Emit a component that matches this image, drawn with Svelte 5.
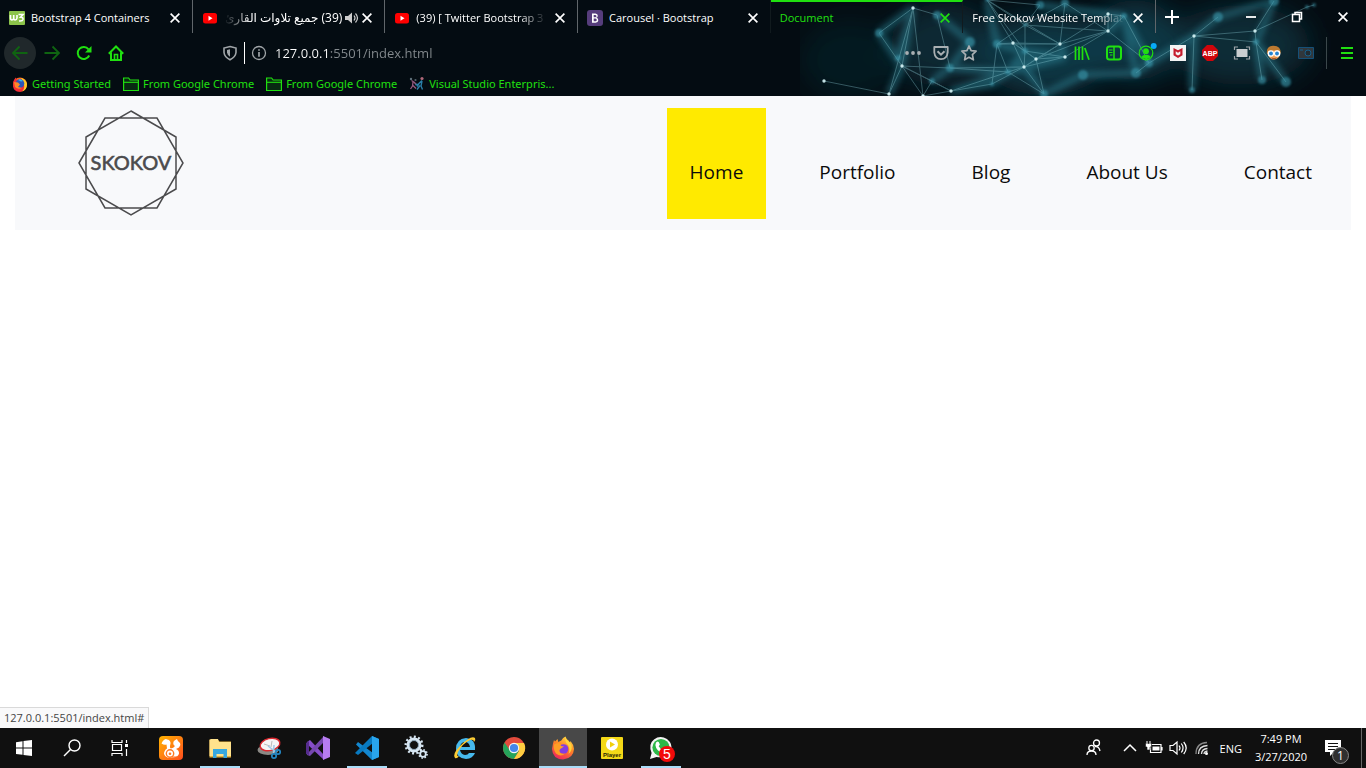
<script>
  const icons = {
    w3: '<rect width="16" height="14" y="1" rx="1" fill="#8bc34a"/><path d="M1.500 5v3q0 2 1.500 2T4.700 8V5v3q0 2 1.500 2T8 8V5M9.500 4.500h4.500l-2.400 2.600q2.600 0 2.400 2.300-.4 1.900-3.900 1.500" fill="none" stroke="#fff" stroke-width="1.600"/>',
    youtube: '<rect x="1" y="3" width="14" height="10.500" rx="2.500" fill="#f00"/><path d="M6.500 5.800v5l4-2.500z" fill="#fff"/>',
    bootstrap: '<rect width="16" height="16" rx="3" fill="#563d7c"/><path d="M5 3.500h3.500q2.300.2 2.300 2.200 0 1.600-1.500 2 2 .4 2 2.500 0 2.300-2.700 2.500H5zM6.700 5v2.200h1.700q1.500-.2 1-1.500-.3-.7-1.200-.7zM6.700 8.400v2.900h1.900q1.600-.2 1-2-.3-.8-1.300-.9z" fill="#fff" fill-rule="evenodd"/>',
    close: '<path d="M3 3l10 10M13 3L3 13" fill="none" stroke="currentColor" stroke-width="1.900"/>',
    speaker: '<path d="M1 6v4h3l4 3.500v-11L4 6z" fill="#ccc"/><path d="M10 5.500q2 2.500 0 5M11.500 3.500q4 4.500 0 9" fill="none" stroke="#ccc" stroke-width="1.200"/>',
    back: '<path d="M15.500 8H1.500M7.500 1.500L1 8l6.500 6.500" fill="none" stroke="currentColor" stroke-width="1.800"/>',
    forward: '<path d="M.5 8h14M8.500 1.500L15 8l-6.500 6.500" fill="none" stroke="currentColor" stroke-width="1.800"/>',
    reload: '<path d="M13.200 10.500A6 6 0 1 1 12.500 4.300" fill="none" stroke="currentColor" stroke-width="2"/><path d="M15.500 1v6.500H9z" fill="currentColor"/>',
    home: '<path d="M.8 8.700L8 1.500l7.200 7.200M3 7.500V15h10V7.500" fill="none" stroke="currentColor" stroke-width="2"/><path d="M6.500 14.500V9.500h3v5" fill="none" stroke="currentColor" stroke-width="1.600"/>',
    shield: '<path d="M8 1.500L14 3v4.500Q13.500 12 8 14.800 2.500 12 2 7.500V3z" fill="none" stroke="#a0a5a8" stroke-width="1.600"/><path d="M8 4.200L5 5v2.500q.4 2.800 3 4.200z" fill="#a0a5a8"/>',
    info: '<circle cx="8" cy="8" r="6.500" fill="none" stroke="#a0a5a8" stroke-width="1.300"/><path d="M8 7v4.800M8 4.200v1.600" stroke="#a0a5a8" stroke-width="1.700"/>',
    dots: '<g fill="#a9afb2"><circle cx="2" cy="8" r="1.900"/><circle cx="8" cy="8" r="1.900"/><circle cx="14" cy="8" r="1.900"/></g>',
    pocket: '<path d="M1.300 2h13.400v5.500Q14 14 8 14.200 2 14 1.300 7.500z" fill="none" stroke="#a9afb2" stroke-width="1.800" stroke-linejoin="round"/><path d="M4.500 6.300L8 9.700l3.500-3.400" fill="none" stroke="#a9afb2" stroke-width="2"/>',
    star: '<path d="M8 1l2.100 4.700 5 .5-3.700 3.500 1 5.100L8 12.300l-4.400 2.500 1-5.100L.9 6.200l5-.5z" fill="none" stroke="#a9afb2" stroke-width="1.700" stroke-linejoin="round"/>',
    library: '<path d="M1.500 1.500v13.500M5 1.500v13.500M8.500 1.500v13.500M10.800 3L15 14.700" stroke="currentColor" stroke-width="1.700" fill="none"/>',
    sidebar: '<rect x="1" y="1.500" width="14" height="13" rx="2.500" fill="none" stroke="currentColor" stroke-width="2"/><path d="M8 2v12" stroke="currentColor" stroke-width="1.500"/><path d="M3 5h3.500M3 7.500h3.500M4 10h2.500" stroke="currentColor" stroke-width="1"/>',
    account: '<circle cx="8" cy="8" r="6.800" fill="none" stroke="currentColor" stroke-width="1.200"/><circle cx="8" cy="6.200" r="2.900" fill="currentColor"/><path d="M3.500 12.300Q4 9.800 8 9.700t4.500 2.600Q8 15.500 3.500 12.300" fill="currentColor"/><circle cx="15.700" cy="1" r="3" fill="#08aaf8"/>',
    mcafee: '<path d="M0 0h16v16H0z" fill="#f4f4f4"/><path d="M3.500 3L8 5.300 12.500 3v7.200L8 13l-4.500-2.800z" fill="#c51c2c"/><path d="M5.700 6.200L8 7.700l2.300-1.500v3L8 10.500 5.700 9.200z" fill="#f4f4f4"/>',
    abp: '<path d="M5 0h6l5 5v6l-5 5H5l-5-5V5z" fill="#d0050b"/><text x="8" y="11" text-anchor="middle" font-family="Liberation Sans" font-size="7" font-weight="700" fill="#fff">ABP</text>',
    capture: '<path d="M2.500 4h11v8h-11z" fill="#c9cdd0"/><path d="M.5 5V2H4M12 2h3.500v3M15.500 11v3H12M4 14H.5v-3" fill="none" stroke="#9da3a8" stroke-width="1.200"/>',
    goggles: '<circle cx="8" cy="8.500" r="6" fill="#f1a257"/><path d="M1 9Q0 1 7 .8 15 .5 15 9l-3-4-6 .5-4 3z" fill="#bc7930"/><circle cx="4.800" cy="8.500" r="3.200" fill="#fff"/><circle cx="11.200" cy="8.500" r="3.200" fill="#fff"/><circle cx="5" cy="8.500" r="1.900" fill="#2383d2"/><circle cx="11" cy="8.500" r="1.900" fill="#2383d2"/><path d="M5.500 13q2.500 1.500 5 0" stroke="#a34d24" fill="none"/>',
    camera: '<path d="M.5 2.500h15v11H.5z" fill="#30373c" stroke="#155078"/><circle cx="10" cy="8" r="3" fill="#222b31" stroke="#17608c"/><path d="M2 5h3" stroke="#17608c"/>',
    menu: '<path d="M2 3h12M2 8h12M2 13h12" stroke="currentColor" stroke-width="2"/>',
    plus: '<path d="M8 1v14M1 8h14" stroke="#fff" stroke-width="2"/>',
    minimize: '<path d="M3 8h10" stroke="#fff" stroke-width="1.800"/>',
    restore: '<path d="M3.500 5.500h7v7h-7zM6 5V3.500h6.500V10H11" fill="none" stroke="#fff" stroke-width="1.500"/>',
    firefoxSmall: '<circle cx="8" cy="8.500" r="7" fill="#f46820"/><path d="M1.500 5L3.500 1.500 5 4q5-3 9 2 2 7-4 9.500Q2 17 1 10" fill="#f52c36"/><path d="M9 2q5 1 6 6 0 6-5 7.500 3-3 2-7z" fill="#ffcb26"/><circle cx="8" cy="7.500" r="4.300" fill="#2d56b8"/><path d="M2 6l4 .5 2 2-2 2.500 4 1q-4 2-7-1z" fill="#ff8726"/><path d="M6 4l2-1 3 2-2 .5z" fill="#39b7ef"/>',
    folder: '<path d="M.6 14.500V2h5l1.500 2h8.300v10.500z" fill="#082a12" stroke="currentColor" stroke-width="1.200"/><path d="M1 6.300h14" stroke="currentColor" stroke-width="1.100"/>',
    vsEvent: '<path d="M2.500 4.500l3 2 1.500 2M4 6l-.5 4-2 3M4 9.500l3 3" fill="none" stroke="#96587f" stroke-width="1.300"/><path d="M13 4.500l-3 3-2 3M13 5l-1 5 1.500 3.500M8.500 8l-2 1M11 9.500l-3 4" fill="none" stroke="#2a7fa8" stroke-width="1.400"/><circle cx="2" cy="3" r="1.200" fill="#60707a"/><circle cx="13" cy="2.500" r="1.600" fill="#b0687a"/><circle cx="6.500" cy="4" r="1.100" fill="#55656d"/>'
  };

  const taskIcons = {
    start: '<path d="M4 6.200l6.500-1v6.300H4zM11.500 5L20 4v7.500h-8.500zM4 12.500h6.500v6.300L4 18zM11.500 12.500H20V20l-8.500-1z" fill="#fff"/>',
    search: '<circle cx="14.500" cy="9.500" r="5.500" fill="none" stroke="#fff" stroke-width="1.400"/><path d="M10.500 13.500L4 20" stroke="#fff" stroke-width="1.500"/>',
    tasks: '<path d="M4 4v2.500h10V4M4 20v-2.500h10V20M4.500 8.500h9v6h-9zM18.500 4v3M18.500 13v7" fill="none" stroke="#fff" stroke-width="1.200"/><path d="M17 8h3v3h-3z" fill="#fff"/>',
    uc: '<defs><linearGradient id="uc" x2="1" y2="1"><stop stop-color="#ffb400"/><stop offset="1" stop-color="#ff4d1f"/></linearGradient></defs><rect width="24" height="24" rx="4" fill="url(#uc)"/><path d="M2.500 7.500Q4 3.500 7 3l1 .6q3 .4 3.600 3.400l-.6 3q-.4 1.600.8 2.400 2.700-.2 4.200-2.400-2.500-1.500-1.400-4.500.8-1.500 3.400-2.500.6 2.500 3 4 1.300 2.300-1 4.500l-3 1.500q3.200 1 3 4.500-.7 3.500-5.500 4H8.500q-2.500-.5-3.500-3.500 0-3.500 3-5.500L7.500 8.500q-2.500.7-5-1z" fill="#fff"/><circle cx="11" cy="17.500" r="3.700" fill="none" stroke="#ff7a22" stroke-width="1.400"/><circle cx="11" cy="17.700" r="1.300" fill="#ff7a22"/><path d="M13 21h6" stroke="#ff6a20"/>',
    explorer: '<path d="M1.500 3.500h8l2 2H23v16H1.500z" fill="#e5b23d"/><path d="M3 3h7l1 3h12v14H1.500V4z" fill="#ffe28c"/><path d="M5 22v-9h14v9h-3.500v-4h-7v4z" fill="#37a9df"/>',
    snip: '<ellipse cx="11" cy="14" rx="10.500" ry="5" fill="#8b8985"/><ellipse cx="13" cy="8.500" rx="10" ry="6" transform="rotate(-13 13 8.500)" fill="#f5f5f5" stroke="#db2930" stroke-width="1.400"/><path d="M7 8l6 2M15 5l-1 6" stroke="#bbb"/><path d="M11 10l8 6M17 9l-.500 8" stroke="#9fc8e6" stroke-width="1.500"/><circle cx="21" cy="16" r="2.200" fill="none" stroke="#2386c2" stroke-width="1.700"/><circle cx="17" cy="20" r="2.200" fill="none" stroke="#2386c2" stroke-width="1.700"/>',
    vs: '<path d="M1 6l3-2 14 15V24L1 8z" fill="#864dc8"/><path d="M1 18l17-18v6L4 20l-3-1z" fill="#7547ae"/><path d="M0 7l3-2v14l-3-1z" fill="#552c8d"/><path d="M17 0l7 3v18l-7 3z" fill="#b77cf2"/>',
    code: '<path d="M17 0l7 3v18l-7 3L1 8.500l2-2.500L18 17z" fill="#1387cf"/><path d="M18 7L3 19l-3-2L17 0z" fill="#087ac1"/><path d="M17 0l7 3v18l-7 3z" fill="#29a5ed"/>',
    gears: '<g fill="none" stroke="#d7e6f2"><circle cx="10" cy="9" r="6" stroke-width="3"/><circle cx="10" cy="9" r="8.300" stroke-width="2.400" stroke-dasharray="2 2.300"/><circle cx="19" cy="18" r="2.800" stroke-width="1.800"/><circle cx="19" cy="18" r="4.100" stroke-width="1.600" stroke-dasharray="1.500 1.700"/></g><circle cx="10" cy="9" r="4.500" fill="none" stroke="#8da8bb"/>',
    ie: '<path d="M7 14h15q1-11-9-12Q3 3 3 13q0 9 10 10 7-.5 9-6h-6q-1 2-4 2-4-.5-5-5zm0-3q1-5 5-5t5 5z" fill="#47b9ed"/><path d="M2 22q-3-4 5-12Q18-1 22 2q1 2-1 4 0-3-4-2Q10 7 5 16q-2 5 1 4-2 3-4 2" fill="#fbcb35"/>',
    chrome: '<circle cx="12" cy="12" r="11" fill="#e34b3d"/><path d="M2.500 6.500A11 11 0 0 0 12 23l5.500-9-5 2.500L7 13z" fill="#25a35a"/><path d="M12 7h10a11 11 0 0 1-10 16l5-8z" fill="#ffcd40"/><circle cx="12" cy="12" r="5.200" fill="#f5f5f5"/><circle cx="12" cy="12" r="4.100" fill="#4387eb"/>',
    firefox: '<defs><linearGradient id="fx" x1=".8" y1="0" x2=".3" y2="1"><stop stop-color="#ffe046"/><stop offset=".45" stop-color="#ff8625"/><stop offset="1" stop-color="#f0245e"/></linearGradient></defs><path d="M2 7.500l1-3.500 1 1.500L6.500 3l.8 3 3-1.500q1.500-3 4.200-4 .5 2.500 3 4l1.500 2 .5-1.500q3.500 4 3.500 8-.5 9.500-11 10.500Q1.500 23 1 13z" fill="url(#fx)"/><circle cx="12.500" cy="13" r="4.800" fill="#843de0"/><path d="M3 8.500q4-2.500 6-1l1 2.500 3 .5-3 2q-2.500 1.500-1 4 2 2 5 1-4 4-9 0-3-4-2-9z" fill="#ff9e25"/><path d="M14 1q0 5 3 8 2.500 4 .5 9 4-3 3-9-1.500-3-4-4.500" fill="#ffd53d"/>',
    player: '<rect x="1" y="1" width="22" height="22" rx="1" fill="#f4d817"/><circle cx="12" cy="8.500" r="6" fill="#fff"/><path d="M10 5.500v6l5-3z" fill="#f1cf0b"/><text x="12" y="21" text-anchor="middle" font-family="Liberation Sans" font-size="6" font-weight="700" fill="#2b2505">Player</text>',
    whatsapp: '<path d="M1 23l1.600-6Q-1 8 5 3.500T18 3q6 5 4 11-4 9-14.500 7z" fill="#f4f4f4"/><circle cx="12" cy="11.500" r="8.600" fill="#2db848"/><path d="M7 6.500l1.500-1 1.200.4 1.200 2.700-1.200 1.700q1.500 2.700 4 3.700l1.500-1.700 3 1.500q-.7 3.500-4 3.200-7-1.500-7.800-8z" fill="#fff"/>',
    people: '<g fill="none" stroke="#fff" stroke-width="1.300"><circle cx="14.500" cy="7" r="3"/><path d="M13 10.700q4-.7 5 4.300"/><circle cx="9.500" cy="12" r="2.700"/><path d="M5 19q0-4 4.500-4t4.500 4"/></g>',
    chevron: '<path d="M6 15l6-6 6 6" fill="none" stroke="#fff" stroke-width="1.500"/>',
    battery: '<path d="M8.500 8.500h10.500v8H8.500z M20 11v3.500" fill="none" stroke="#fff" stroke-width="1.200"/><path d="M10.500 10.500h7v4h-7z" fill="#fff"/><path d="M3.500 7.500h6v3.500H8v3H5v-3H3.500z" fill="#fff" stroke="#101010" stroke-width=".6"/><path d="M5 5v3M8 5v3" stroke="#fff"/>',
    sound: '<path d="M4 9.500v5h3l4 3.500V6L7 9.500z" fill="none" stroke="#fff" stroke-width="1.200"/><path d="M13 9.500q2 2.500 0 5M15.300 7.500q3.500 4.500 0 9M17.700 6q5 6 0 12" fill="none" stroke="#fff" stroke-width="1.200"/>',
    wifi: '<g fill="none" stroke="#ddd" stroke-width="1.300"><path d="M6 18Q6 7 17 6.500" stroke="#888"/><path d="M8.500 18q0-8 9-8.500M11.500 18q0-5 6-5.500M14 18q0-2.500 3.500-3"/></g><circle cx="16.500" cy="17.500" r="1.500" fill="#fff"/>',
    notice: '<path d="M4 4h16v12h-7l-4 4v-4H4z" fill="#fff"/><path d="M7 7.500h10M7 10.500h10M7 13.500h7" stroke="#111" stroke-width="1.200"/>'
  };

  const tabs = [
    { title: 'Bootstrap 4 Containers', icon: 'w3' },
    { title: '(39) جميع تلاوات القارئ', icon: 'youtube', rtl: true, sound: true, fade: true },
    { title: '(39) [ Twitter Bootstrap 3 ]', icon: 'youtube', fade: true },
    { title: 'Carousel · Bootstrap', icon: 'bootstrap' },
    { title: 'Document', active: true },
    { title: 'Free Skokov Website Template', fade: true }
  ];
  const bookmarks = [
    ['firefoxSmall', 'Getting Started'],
    ['folder', 'From Google Chrome'],
    ['folder', 'From Google Chrome'],
    ['vsEvent', 'Visual Studio Enterpris...']
  ];
  const extensions = [
    ['library', 'Library'], ['sidebar', 'Sidebars'], ['account', 'Account'], ['mcafee', 'McAfee'],
    ['abp', 'Adblock Plus'], ['capture', 'Capture'], ['goggles', 'Private view'], ['camera', 'Camera']
  ];
  const links = ['Home', 'Portfolio', 'Blog', 'About Us', 'Contact'];
  const apps = [
    { id: 'uc', name: 'UC Browser' }, { id: 'explorer', name: 'File Explorer', open: true },
    { id: 'snip', name: 'Snipping Tool' }, { id: 'vs', name: 'Visual Studio' },
    { id: 'code', name: 'Visual Studio Code', open: true }, { id: 'gears', name: 'Services' },
    { id: 'ie', name: 'Internet Explorer' }, { id: 'chrome', name: 'Chrome' },
    { id: 'firefox', name: 'Firefox', open: true, focused: true }, { id: 'player', name: 'Player' },
    { id: 'whatsapp', name: 'WhatsApp', open: true, badge: '5' }
  ];

  // Theme artwork: [x, y, radius, soft]
  const nodes = [
    [113, 8, 2, 0], [137, 15, 4, 1], [79, 33, 4, 1], [102, 66, 2, 0], [24, 81, 2, 0], [89, 94, 2, 0],
    [132, 81, 3, 1], [151, 91, 2, 0], [192, 84, 2, 1], [150, 68, 4, 1], [197, 44, 4, 1], [213, 43, 2, 0],
    [224, 67, 2, 0], [236, 59, 2, 0], [260, 44, 2, 0], [265, 57, 2, 0], [208, 72, 3, 1], [240, 5, 4, 1],
    [265, 3, 4, 1], [244, 94, 4, 1], [187, 0, 2, 1], [123, 96, 2, 0], [225, 25, 2, 1], [308, 31, 2, 0],
    [308, 14, 2, 0], [324, 16, 3, 1], [394, 36, 2, 0], [455, 31, 2, 0], [418, 17, 5, 1], [507, 7, 2, 1],
    [514, 5, 2, 1], [456, 42, 3, 1], [462, 80, 4, 1], [392, 90, 3, 1], [474, 1, 5, 1], [283, 75, 5, 1],
    [336, 73, 5, 1], [349, 63, 4, 1], [486, 82, 5, 1], [225, 51, 3, 1], [98, 58, 3, 1], [170, 42, 5, 1]
  ];
  const edges = [
    [0, 3], [0, 1], [0, 2], [2, 3], [3, 5], [4, 5], [3, 7], [3, 9], [9, 12], [6, 7], [7, 8], [8, 12], [7, 16],
    [8, 10], [10, 11], [11, 14], [11, 12], [11, 13], [12, 13], [13, 14], [13, 15], [12, 15], [14, 23],
    [15, 23], [14, 24], [20, 11], [20, 22], [22, 10], [22, 14], [22, 39], [12, 16], [12, 39], [39, 13], [39, 15],
    [17, 22], [18, 22], [18, 23], [23, 24], [24, 25], [23, 25], [25, 37], [23, 37], [37, 26], [26, 27],
    [26, 28], [26, 33], [27, 29], [29, 30], [27, 31], [31, 32], [27, 34], [31, 38], [36, 37], [26, 31],
    [16, 10], [12, 19], [6, 21], [7, 21], [17, 20], [14, 12], [9, 16], [0, 21], [1, 9], [13, 23], [10, 14],
    [20, 39], [20, 14], [11, 39], [19, 13], [19, 16], [3, 21], [3, 6], [0, 5], [14, 18], [22, 23]
  ];
  const glows = [
    [3, 0], [3, 5], [9, 16], [16, 39], [39, 15], [25, 37], [37, 36], [31, 32], [31, 38], [26, 28], [37, 26],
    [34, 31], [26, 33], [8, 16], [7, 8], [0, 2], [2, 3], [25, 24], [20, 10], [10, 39], [16, 15], [15, 14],
    [7, 16], [6, 9], [25, 36], [23, 25], [36, 35], [34, 28], [1, 41], [41, 9], [12, 19], [19, 35], [17, 25],
    [40, 0], [12, 15], [16, 13], [10, 20]
  ];
</script>

{#snippet glyph(name, size = 16)}
  <svg class="glyph" width={size} height={size} viewBox="0 0 16 16" aria-hidden="true">{@html icons[name]}</svg>
{/snippet}
{#snippet big(name)}
  <svg class="glyph" width="24" height="24" viewBox="0 0 24 24" aria-hidden="true">{@html taskIcons[name]}</svg>
{/snippet}

<div class="desktop">
  <header class="browser">
    <svg class="art" width="566" height="96" viewBox="0 0 566 96" aria-hidden="true">
      <defs>
        <filter id="soft" x="-20%" y="-20%" width="140%" height="140%"><feGaussianBlur stdDeviation="3" /></filter>
        <filter id="haze" x="-50%" y="-50%" width="200%" height="200%"><feGaussianBlur stdDeviation="14" /></filter>
        <filter id="dotblur" x="-50%" y="-50%" width="200%" height="200%"><feGaussianBlur stdDeviation="1.300" /></filter>
      </defs>
      <g filter="url(#haze)" fill="#12495a">
        <ellipse cx="50" cy="60" rx="50" ry="40" opacity=".2" />
        <ellipse cx="145" cy="45" rx="55" ry="42" opacity=".45" />
        <ellipse cx="245" cy="55" rx="65" ry="40" opacity=".7" />
        <ellipse cx="335" cy="40" rx="45" ry="40" opacity=".7" />
        <ellipse cx="440" cy="45" rx="70" ry="40" opacity=".5" />
      </g>
      <g filter="url(#soft)" stroke="#2f8699" stroke-width="7" opacity=".5">
        {#each glows as [a, b]}
          <line x1={nodes[a][0]} y1={nodes[a][1]} x2={nodes[b][0]} y2={nodes[b][1]} />
        {/each}
      </g>
      <g stroke="#8bcbd4" stroke-width="1" opacity=".36">
        {#each edges as [a, b]}
          <line x1={nodes[a][0]} y1={nodes[a][1]} x2={nodes[b][0]} y2={nodes[b][1]} />
        {/each}
      </g>
      {#each nodes as [x, y, r, soft]}
        <circle cx={x} cy={y} r={soft ? r : 1.7} fill={soft ? '#3d9eb3' : '#d7f5f7'} opacity={soft ? 0.55 : 0.9} filter={soft ? 'url(#dotblur)' : undefined} />
      {/each}
    </svg>

    <div class="tabstrip">
      <div class="tabs">
        {#each tabs as tab}
          <div class="tab" class:active={tab.active}>
            {#if tab.icon}{@render glyph(tab.icon)}{/if}
            <a class="title" class:fade={tab.fade} class:rtl={tab.rtl} dir={tab.rtl ? 'rtl' : 'ltr'} href="#tab">{tab.title}</a>
            {#if tab.sound}<button class="mute" aria-label="Mute tab">{@render glyph('speaker')}</button>{/if}
            <button class="close" aria-label="Close tab">{@render glyph('close', 14)}</button>
          </div>
        {/each}
      </div>
      <button class="newtab" aria-label="New tab">{@render glyph('plus')}</button>
      <div class="window">
        <button aria-label="Minimize">{@render glyph('minimize')}</button>
        <button aria-label="Restore">{@render glyph('restore')}</button>
        <button aria-label="Close">{@render glyph('close', 14)}</button>
      </div>
    </div>

    <div class="toolbar">
      <button class="tool back" aria-label="Back">{@render glyph('back')}</button>
      <button class="tool dim" aria-label="Forward">{@render glyph('forward')}</button>
      <button class="tool" aria-label="Reload">{@render glyph('reload')}</button>
      <button class="tool" aria-label="Home">{@render glyph('home')}</button>
      <div class="address">
        <button class="small" aria-label="Tracking protection">{@render glyph('shield')}</button>
        <span class="bar"></span>
        <button class="small" aria-label="Site information">{@render glyph('info')}</button>
        <input aria-label="Address" value="127.0.0.1:5501/index.html" spellcheck="false" />
        <button class="small" aria-label="Page actions">{@render glyph('dots')}</button>
        <button class="small" aria-label="Save to Pocket">{@render glyph('pocket')}</button>
        <button class="small" aria-label="Bookmark this page">{@render glyph('star')}</button>
      </div>
      {#each extensions as [id, name]}
        <button class="tool" aria-label={name}>{@render glyph(id)}</button>
      {/each}
      <span class="divider"></span>
      <button class="tool" aria-label="Menu">{@render glyph('menu')}</button>
    </div>

    <nav class="bookmarks" aria-label="Bookmarks">
      {#each bookmarks as [id, name]}
        <a href="#bookmark">{@render glyph(id)}<span>{name}</span></a>
      {/each}
    </nav>
  </header>

  <main>
    <nav class="site" aria-label="Main">
      <a class="logo" href="#home" aria-label="Skokov">
        <svg width="108" height="108" viewBox="0 0 108 108">
          <path d="M54 3l45 26v52l-45 26L9 81V29zM2 55L28 10h52l26 45-26 45H28z" fill="none" stroke="#4b4b4d" stroke-width="1.500" />
          <text x="54" y="62" text-anchor="middle">SKOKOV</text>
        </svg>
      </a>
      <ul>
        {#each links as link, i}
          <li><a href="#page" class:current={i === 0}>{link}</a></li>
        {/each}
      </ul>
    </nav>
    <div class="status">127.0.0.1:5501/index.html#</div>
  </main>

  <footer class="taskbar">
    <button class="task" aria-label="Start">{@render big('start')}</button>
    <button class="task" aria-label="Search">{@render big('search')}</button>
    <button class="task" aria-label="Task view">{@render big('tasks')}</button>
    <div class="apps">
      {#each apps as app}
        <button class="task" class:open={app.open} class:focused={app.focused} aria-label={app.name}>
          {@render big(app.id)}
          {#if app.badge}<span class="badge">{app.badge}</span>{/if}
        </button>
      {/each}
    </div>
    <div class="tray">
      <button class="people" aria-label="People">{@render big('people')}</button>
      <button aria-label="Hidden icons">{@render big('chevron')}</button>
      <button aria-label="Battery">{@render big('battery')}</button>
      <button aria-label="Volume">{@render big('sound')}</button>
      <button aria-label="Network">{@render big('wifi')}</button>
      <button class="lang">ENG</button>
      <button class="clock"><span>7:49 PM</span><span>3/27/2020</span></button>
      <button class="notice" aria-label="Notifications">{@render big('notice')}<span class="count">1</span></button>
      <button class="peek" aria-label="Show desktop"></button>
    </div>
  </footer>
</div>

<style>
  :global(body) { margin: 0; background: #fff; }
  .desktop {
    min-height: 100vh;
    display: flex;
    flex-direction: column;
    font-family: "Open Sans", "Noto Sans", "DejaVu Sans", sans-serif;
    font-size: 12px;
  }
  button { border: 0; padding: 0; margin: 0; background: none; color: inherit; font: inherit; display: flex; align-items: center; justify-content: center; }
  a { color: inherit; text-decoration: none; }
  .glyph { display: block; flex: none; overflow: visible; }

  .browser { position: relative; background: #040c12; color: #20e010; overflow: hidden; }
  .art { position: absolute; right: 0; top: 0; }
  .tabstrip, .toolbar, .bookmarks { position: relative; display: flex; align-items: center; }
  .tabstrip { height: 33px; color: #fff; }
  .tabs { flex: 0 1 1156px; display: flex; height: 100%; min-width: 0; }
  .tab {
    flex: 1 1 0; min-width: 0; box-sizing: border-box; display: flex; align-items: center; gap: 6px;
    padding: 2px 10px 0 9px; border-right: 1px solid #60666a;
  }
  .tab:nth-child(4), .tab.active { border-right-color: #111a1e; }
  .tab.active { color: #20e010; border-top: 2px solid #20e010; padding-top: 0; }
  .title { flex: 1; min-width: 0; overflow: hidden; white-space: nowrap; font-size: 11px; line-height: 18px; }
  .fade { mask-image: linear-gradient(to left, transparent, #000 28px); }
  .fade.rtl { mask-image: linear-gradient(to right, transparent, #000 28px); }
  .rtl { font-size: 12px; }
  .mute { margin: 0 -6px 0 -4px; }
  .newtab { width: 32px; height: 32px; }
  .window { display: flex; margin-left: auto; }
  .window button { width: 46px; height: 32px; }

  .toolbar { height: 40px; padding: 0 3px 0 4px; }
  .tool { width: 32px; height: 32px; flex: none; }
  .dim { color: #0f6411; }
  .back { border-radius: 50%; background: #20282b; color: #0f6411; }
  .address { flex: 1; min-width: 0; display: flex; align-items: center; margin: 0 83px 0 84px; height: 30px; }
  .small { width: 28px; height: 28px; flex: none; }
  .bar { width: 1px; height: 22px; background: #fff; }
  input {
    flex: 1; min-width: 0; border: 0; padding: 0 0 0 2px; outline: 0; font: inherit; font-size: 13px; line-height: 20px;
    background: linear-gradient(to right, #fff 56px, #858b8f 56px); background-clip: text; color: transparent;
  }
  .divider { width: 1px; height: 32px; background: #3b474b; margin: 0 4px; }
  .bookmarks { height: 23px; padding: 0 12px 2px; gap: 12px; font-family: "Noto Sans", sans-serif; font-size: 11px; box-sizing: border-box; }
  .bookmarks a { display: flex; align-items: center; gap: 4px; line-height: 16px; white-space: nowrap; }

  main { flex: 1; display: flex; flex-direction: column; align-items: stretch; }
  .site { margin: 0 15px; background: #f8f9fb; padding: 12px 16px 11px 62px; display: flex; justify-content: space-between; align-items: flex-start; }
  .logo text { font-family: Lato, sans-serif; font-size: 20px; font-weight: 400; fill: #4b4b4d; stroke: #4b4b4d; stroke-width: .6px; }
  .logo svg { display: block; }
  ul { display: flex; gap: 30px; margin: 0; padding: 0; list-style: none; font-size: 19px; color: #0b0b0b; }
  ul a { display: block; padding: 49px 23px 32px; line-height: 30px; }
  ul .current { background: #ffea00; }
  .status { margin-top: auto; align-self: flex-start; border: 1px solid #d9d9d9; border-width: 1px 1px 0 0; background: #f9f9fa; color: #444; padding: 1px 4px 1px; font-size: 11px; line-height: 18px; }

  .taskbar { height: 40px; background: #101010; color: #fff; display: flex; }
  .task { width: 48px; height: 40px; position: relative; flex: none; }
  .apps { display: flex; gap: 1px; margin-left: 3px; }
  .focused { background: #484848; }
  .open::after { content: ""; position: absolute; bottom: 0; left: 4px; right: 4px; height: 2px; background: #a9dcf8; }
  .focused::after { left: 0; right: 0; }
  .badge { position: absolute; left: 22px; top: 18px; width: 16px; height: 16px; border-radius: 50%; background: #f20a0a; font: 14px/16px "Liberation Sans", sans-serif; text-align: center; }
  .tray { display: flex; margin-left: auto; }
  .tray button { min-width: 24px; position: relative; }
  .tray .people { margin-right: 12px; }
  .tray .lang { padding: 0 3px 0 6px; font-size: 11px; }
  .tray .clock { flex-direction: column; width: 70px; font-size: 11px; line-height: 18px; margin-left: 1px; }
  .tray .notice { width: 34px; }
  .count { position: absolute; left: 16px; top: 19px; width: 15px; height: 15px; border: 1px solid #888; border-radius: 50%; background: #303030; line-height: 15px; text-align: center; }
  .tray .peek { min-width: 5px; border-left: 1px solid #666; margin-left: 11px; }
</style>
